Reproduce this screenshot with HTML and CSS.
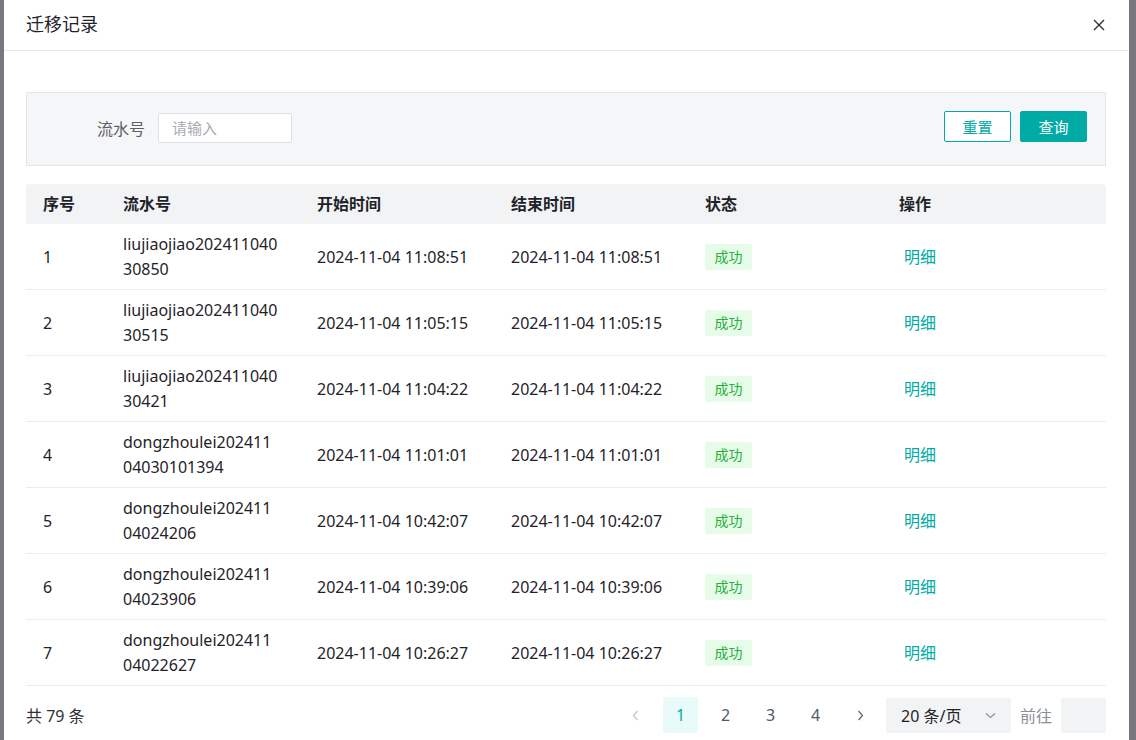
FILE: index.html
```html
<!DOCTYPE html>
<html lang="zh-CN">
<head>
<meta charset="utf-8">
<title>迁移记录</title>
<link rel="stylesheet" href="styles.css">
</head>
<body>
<div class="overlay">
  <div class="modal">
    <div class="modal-header">
      <span class="modal-title">迁移记录</span>
      <button class="close-btn" aria-label="关闭">
        <svg width="12" height="12" viewBox="0 0 12 12"><path d="M1 1L11 11M11 1L1 11" stroke="#303133" stroke-width="1.4" fill="none"/></svg>
      </button>
    </div>
    <div class="modal-body">
      <div class="filter">
        <label class="filter-label">流水号</label>
        <div class="filter-input">请输入</div>
        <div class="filter-actions">
          <button class="btn btn-outline">重置</button>
          <button class="btn btn-primary">查询</button>
        </div>
      </div>

      <table class="grid">
        <colgroup>
          <col class="c-idx"><col class="c-no"><col class="c-time"><col class="c-time"><col class="c-time"><col>
        </colgroup>
        <thead>
          <tr><th>序号</th><th>流水号</th><th>开始时间</th><th>结束时间</th><th>状态</th><th>操作</th></tr>
        </thead>
        <tbody>
          <tr><td>1</td><td class="serial">liujiaojiao20241104030850</td><td>2024-11-04 11:08:51</td><td>2024-11-04 11:08:51</td><td><span class="tag">成功</span></td><td><a class="link">明细</a></td></tr>
          <tr><td>2</td><td class="serial">liujiaojiao20241104030515</td><td>2024-11-04 11:05:15</td><td>2024-11-04 11:05:15</td><td><span class="tag">成功</span></td><td><a class="link">明细</a></td></tr>
          <tr><td>3</td><td class="serial">liujiaojiao20241104030421</td><td>2024-11-04 11:04:22</td><td>2024-11-04 11:04:22</td><td><span class="tag">成功</span></td><td><a class="link">明细</a></td></tr>
          <tr><td>4</td><td class="serial">dongzhoulei20241104030101394</td><td>2024-11-04 11:01:01</td><td>2024-11-04 11:01:01</td><td><span class="tag">成功</span></td><td><a class="link">明细</a></td></tr>
          <tr><td>5</td><td class="serial">dongzhoulei20241104024206</td><td>2024-11-04 10:42:07</td><td>2024-11-04 10:42:07</td><td><span class="tag">成功</span></td><td><a class="link">明细</a></td></tr>
          <tr><td>6</td><td class="serial">dongzhoulei20241104023906</td><td>2024-11-04 10:39:06</td><td>2024-11-04 10:39:06</td><td><span class="tag">成功</span></td><td><a class="link">明细</a></td></tr>
          <tr><td>7</td><td class="serial">dongzhoulei20241104022627</td><td>2024-11-04 10:26:27</td><td>2024-11-04 10:26:27</td><td><span class="tag">成功</span></td><td><a class="link">明细</a></td></tr>
        </tbody>
      </table>

      <div class="footer">
        <span class="total">共 79 条</span>
        <div class="pager">
          <button class="pg-btn pg-arrow disabled">
            <svg width="7" height="11" viewBox="0 0 7 11"><path d="M5.5 1L1.5 5.5L5.5 10" stroke="#c0c4cc" stroke-width="1.2" fill="none"/></svg>
          </button>
          <button class="pg-btn active">1</button>
          <button class="pg-btn">2</button>
          <button class="pg-btn">3</button>
          <button class="pg-btn">4</button>
          <button class="pg-btn pg-arrow">
            <svg width="7" height="11" viewBox="0 0 7 11"><path d="M1.5 1L5.5 5.5L1.5 10" stroke="#606266" stroke-width="1.2" fill="none"/></svg>
          </button>
          <div class="pg-size">
            <span>20 条/页</span>
            <svg width="11" height="7" viewBox="0 0 11 7"><path d="M1 1.5L5.5 5.5L10 1.5" stroke="#8a8f99" stroke-width="1.2" fill="none"/></svg>
          </div>
          <span class="pg-goto">前往</span>
          <div class="pg-input"></div>
        </div>
      </div>
    </div>
  </div>
</div>
</body>
</html>
```

FILE: styles.css
```css
* { box-sizing: border-box; }
html, body {
  margin: 0;
  padding: 0;
  height: 100%;
}
body {
  background: #77787d;
  font-family: "Noto Sans", "Noto Sans CJK SC", sans-serif;
  color: #303133;
  overflow: hidden;
}
.overlay {
  padding: 0 7px 0 4px;
  height: 740px;
}
.modal {
  background: #ffffff;
  height: 760px;
}
.modal-header {
  height: 51px;
  border-bottom: 1px solid #e5e7eb;
  display: flex;
  align-items: center;
  justify-content: space-between;
  padding: 0 23px 3px 22px;
}
.modal-title {
  font-size: 18px;
  color: #1f2329;
  line-height: 24px;
}
.close-btn {
  border: 0;
  background: transparent;
  padding: 0;
  width: 14px;
  height: 14px;
  display: flex;
  align-items: center;
  justify-content: center;
  margin-top: 2px;
}
.modal-body {
  padding: 41px 23px 0 22px;
}
.filter {
  height: 74px;
  background: #f5f6f8;
  border: 1px solid #e3e5e9;
  display: flex;
  align-items: center;
  padding: 0 18px 0 18px;
}
.filter-label {
  width: 100px;
  text-align: right;
  font-size: 16px;
  color: #5e6066;
  margin-right: 13px;
  margin-top: -2px;
}
.filter-input {
  width: 134px;
  height: 30px;
  background: #fff;
  border: 1px solid #dfe1e6;
  border-radius: 2px;
  font-size: 15px;
  color: #a8abb2;
  line-height: 28px;
  padding-left: 13px;
  margin-top: -2px;
}
.filter-actions {
  margin-left: auto;
  display: flex;
  gap: 9px;
  margin-top: -6px;
}
.btn {
  width: 67px;
  height: 31px;
  border-radius: 2px;
  font-family: inherit;
  font-size: 15px;
  padding: 0;
  cursor: pointer;
}
.btn-outline {
  background: #fff;
  border: 1px solid #00aaa5;
  color: #00aaa5;
}
.btn-primary {
  background: #00aaa5;
  border: 1px solid #00aaa5;
  color: #fff;
}

.grid {
  margin-top: 18px;
  width: 100%;
  border-collapse: separate;
  border-spacing: 0;
  table-layout: fixed;
  font-size: 16px;
}
.c-idx { width: 80px; }
.c-no { width: 194px; }
.c-time { width: 194px; }
.grid th {
  height: 40px;
  background: #f2f3f5;
  text-align: left;
  font-weight: 700;
  padding: 0 17px;
  color: #1f2329;
  line-height: 20px;
}
.grid th:first-child { border-top-left-radius: 4px; }
.grid th:last-child { border-top-right-radius: 4px; }
.grid td {
  padding: 8px 17px 7px;
  border-bottom: 1px solid #ebedf0;
  line-height: 25px;
  vertical-align: middle;
  color: #1f2329;
  height: 66px;
}
.grid td.serial {
  word-break: break-all;
  padding-right: 21px;
}
.tag {
  display: inline-block;
  height: 26px;
  line-height: 26px;
  padding: 0 9.5px;
  font-size: 14px;
  color: #26b03c;
  background: #e6fbe8;
  border-radius: 2px;
}
.link {
  color: #00aaa5;
  padding-left: 5px;
  cursor: pointer;
}

.footer {
  display: flex;
  align-items: center;
  justify-content: space-between;
  margin-top: 11px;
  height: 36px;
}
.total {
  font-size: 16px;
  color: #303133;
}
.pager {
  display: flex;
  align-items: center;
}
.pg-btn {
  width: 35px;
  height: 36px;
  border: 0;
  background: transparent;
  font-family: inherit;
  font-size: 16px;
  color: #4e5969;
  padding: 0;
  margin-right: 10px;
  border-radius: 2px;
  display: flex;
  align-items: center;
  justify-content: center;
}
.pg-btn.active {
  background: #e8fbf8;
  color: #00aaa5;
}
.pg-btn:nth-child(6) { margin-right: 8px; }
.pg-size {
  width: 125px;
  height: 35px;
  background: #f2f3f5;
  border-radius: 2px;
  display: flex;
  align-items: center;
  justify-content: space-between;
  padding: 0 15px 0 15px;
  font-size: 16px;
  color: #1f2329;
}
.pg-goto {
  font-size: 16px;
  color: #8a8f99;
  margin: 0 9px;
}
.pg-input {
  width: 45px;
  height: 35px;
  background: #f2f3f5;
  border-radius: 2px;
}
```
